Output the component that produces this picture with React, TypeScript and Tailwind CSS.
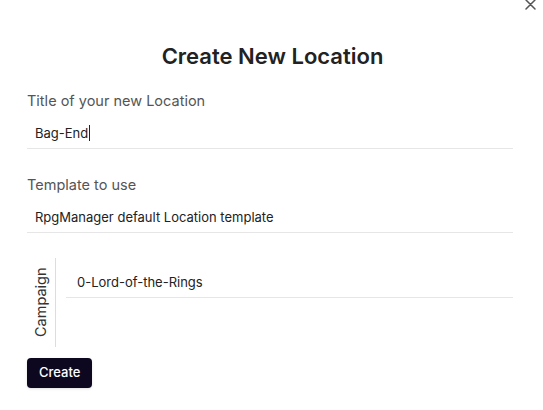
import React from "react";

export default function App() {
  return (
    <div className="relative w-[543px] h-[410px] bg-white overflow-hidden" style={{ fontFamily: "Inter, 'Noto Sans', sans-serif" }}>
      <svg
        className="absolute right-[7px] top-[-1px] block text-[#555]"
        width="11"
        height="11"
        viewBox="0 0 11 11"
        fill="none"
        stroke="currentColor"
        strokeWidth="1.5"
        strokeLinecap="round"
      >
        <path d="M1 1 L10 10 M10 1 L1 10" />
      </svg>
      <div className="px-[27px] pt-[43px]">
        <h1 className="text-center text-[22px] font-semibold text-[#222] leading-[27px] ml-[2px]">Create New Location</h1>

        <div className="mt-[21px] w-[486px]">
          <label className="block text-[14.5px] text-[#555] leading-[20px]">Title of your new Location</label>
          <div className="mt-[12px] border-b border-[#e6e6e6] px-[8px] pb-[5px] text-[13px] text-[#222] leading-[20px] flex items-center">
            Bag-End<span className="inline-block w-px h-[16px] bg-[#222] ml-px" />
          </div>
        </div>

        <div className="mt-[26px] w-[486px]">
          <label className="block text-[14.5px] text-[#555] leading-[20px]">Template to use</label>
          <div className="mt-[12px] border-b border-[#e6e6e6] px-[8px] pb-[5px] text-[13px] text-[#222] leading-[20px]">
            RpgManager default Location template
          </div>
        </div>

        <div className="mt-[25px] flex w-[486px]">
          <div className="w-[29px] h-[89px] border-r border-[#dddddd] flex items-center justify-center">
            <span className="-rotate-90 whitespace-nowrap text-[14.5px] text-[#333] leading-none">Campaign</span>
          </div>
          <div className="flex-1 pl-[10px] pt-[14px]">
            <div className="border-b border-[#e6e6e6] px-[11px] pb-[5px] text-[13px] text-[#222] leading-[20px]">
              0-Lord-of-the-Rings
            </div>
          </div>
        </div>

        <button className="mt-[11px] h-[30px] px-[12px] rounded-[4px] bg-[#0d0820] text-white text-[13px] font-medium shadow-sm">
          Create
        </button>
      </div>
    </div>
  );
}
